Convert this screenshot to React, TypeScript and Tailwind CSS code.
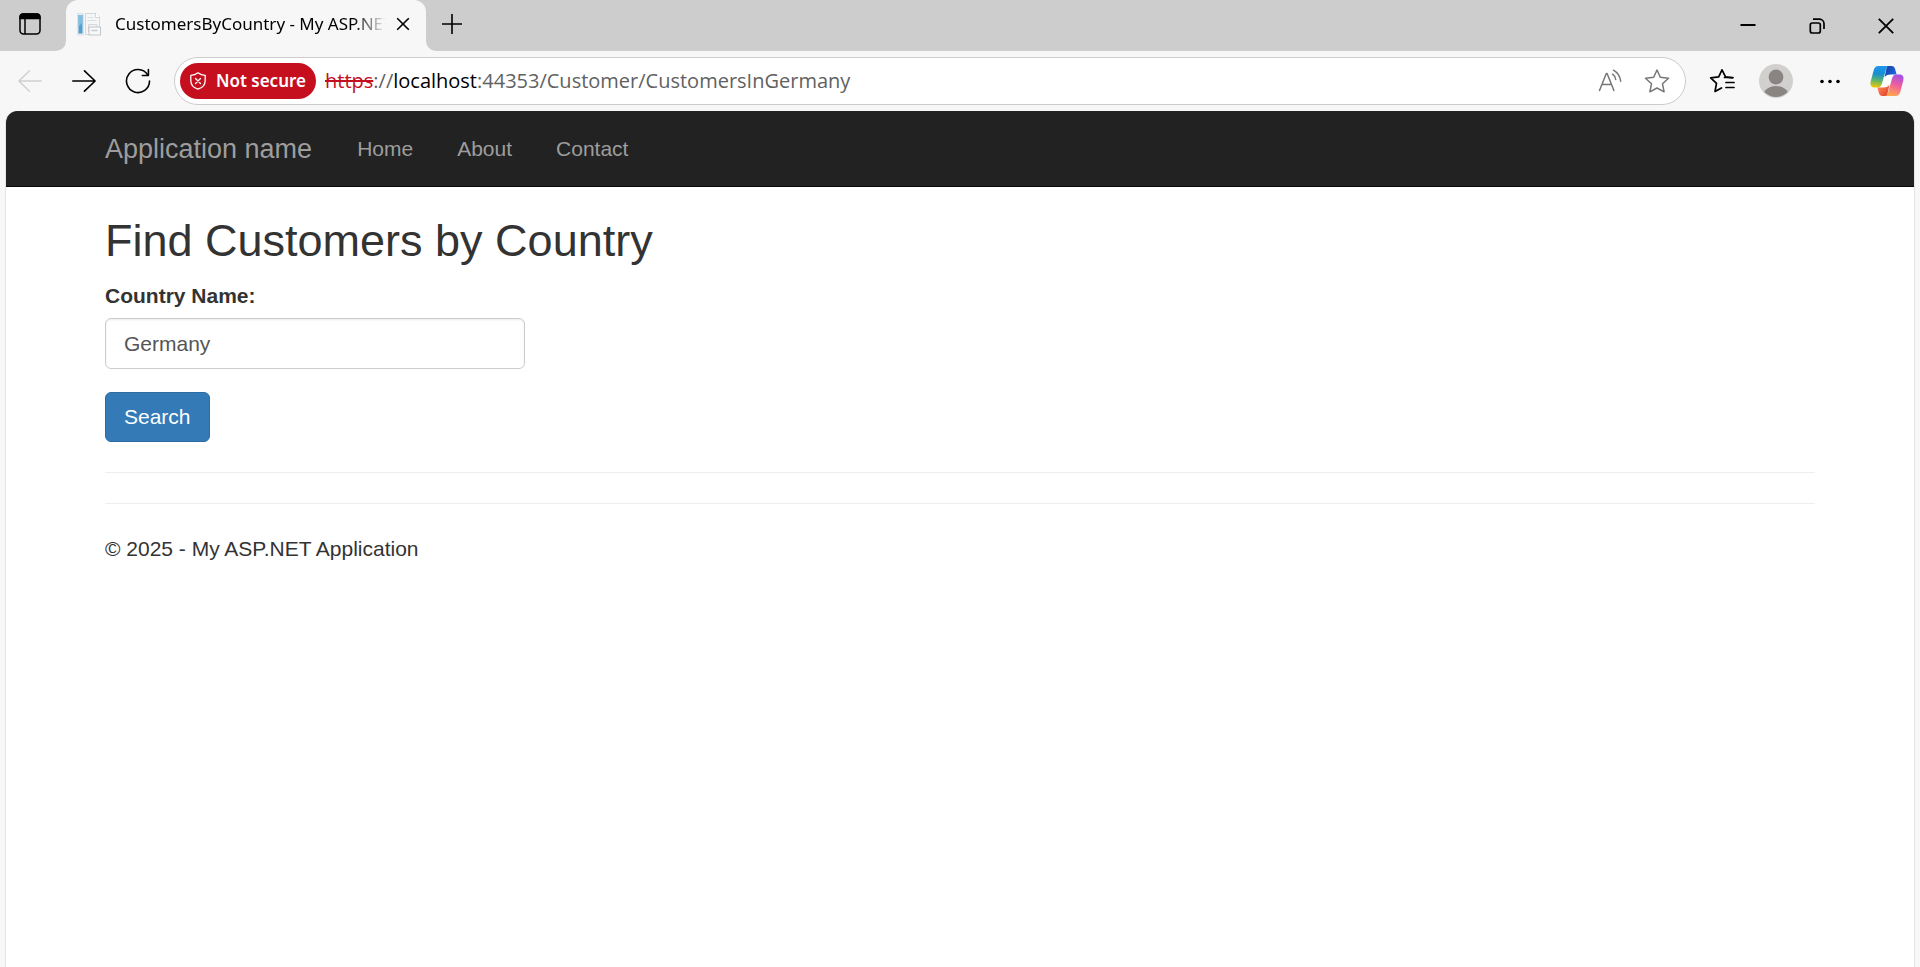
import { useState } from "react";

const navLinks = ["Home", "About", "Contact"];

function SiteIcon() {
  return (
    <svg className="size-6 shrink-0" viewBox="0 0 24 24" fill="none" aria-hidden="true">
      <path d="M.5 1.500h6V23h-6z" fill="#e6ecf0" stroke="#dfe3e6" />
      <path d="M8.500 1.500H19L22.500 5v17.500h-14z" fill="#f4f6f7" stroke="#d6d9dc" />
      <path d="M18.500 1v4.500H23" stroke="#d2d5d8" fill="#fff" />
      <rect x="1.500" y="3" width="4" height="18.500" fill="#4f9fd0" />
      <path d="M1.500 3h4v7l-4 5z" fill="#84bfe2" />
      <path d="M10.500 5.500h6M10.500 8.500h9M10.500 17.500h1" stroke="#dcdfe1" />
      <path d="M11.500 20V12.500h8.500V15" fill="#f2f3f4" stroke="#d6d9dc" />
      <rect x="12" y="15" width="11.500" height="8" fill="#f7f8f9" stroke="#c3c6c9" />
      <path d="M14.500 18.500h6" stroke="#c9ccd0" strokeWidth="1.500" />
    </svg>
  );
}

function CopilotIcon() {
  return (
    <svg className="h-8 w-9" viewBox="0 0 36 32" aria-hidden="true">
      <defs>
        <linearGradient id="cp-left" x1="10" y1="1" x2="7" y2="23" gradientUnits="userSpaceOnUse">
          <stop offset="0" stopColor="#1d96ea" />
          <stop offset="0.350" stopColor="#168fd2" />
          <stop offset="0.650" stopColor="#5bb56d" />
          <stop offset="1" stopColor="#fbc900" />
        </linearGradient>
        <linearGradient id="cp-fold" x1="17" y1="3" x2="26" y2="9" gradientUnits="userSpaceOnUse">
          <stop offset="0" stopColor="#1443a5" />
          <stop offset="1" stopColor="#1f64e2" />
        </linearGradient>
        <linearGradient id="cp-right" x1="31" y1="9" x2="24" y2="31" gradientUnits="userSpaceOnUse">
          <stop offset="0" stopColor="#9a4df0" />
          <stop offset="0.500" stopColor="#ef5f9d" />
          <stop offset="1" stopColor="#ffa450" />
        </linearGradient>
        <linearGradient id="cp-base" x1="11" y1="23" x2="19" y2="31" gradientUnits="userSpaceOnUse">
          <stop offset="0" stopColor="#fb7a4c" />
          <stop offset="1" stopColor="#e0402c" />
        </linearGradient>
      </defs>
      <path d="M14 10h12l-2.500 12H11z" fill="#ffffff" />
      <path d="M18 1h4.500c2 0 3 1 3.600 3l1.500 5.500h-6c-2.500 0-4.500.8-6 2.500z" fill="url(#cp-fold)" />
      <path d="M18 31h-4.500c-2 0-3-1-3.600-3L8.400 22.500h6c2.500 0 4.500-.8 6-2.500z" fill="url(#cp-base)" />
      <path d="M9.500 1H20c-2 .3-2.700 2-3.200 4L13 18.500c-.8 2.800-2 4-4.500 4h-3C2.200 22.500.8 20 1.700 16.500L4.600 5.500C5.400 2.600 6.800 1 9.500 1z" fill="url(#cp-left)" />
      <path d="M26.500 31H16c2-.3 2.700-2 3.200-4L23 13.500c.8-2.800 2-4 4.500-4h3c3.300 0 4.700 2.500 3.800 6l-2.900 11c-.8 2.900-2.200 4.500-4.900 4.500z" fill="url(#cp-right)" />
    </svg>
  );
}

function TabStrip() {
  return (
    <div className="flex h-[51px] bg-[#cdcdcd] text-black">
      <button type="button" aria-label="Tab actions" className="mr-1.5 flex w-[60px] items-center justify-center pb-1">
        <svg className="size-6" viewBox="0 0 24 24" fill="none" aria-hidden="true">
          <rect x="2" y="2" width="20" height="20" rx="3.500" stroke="currentColor" strokeWidth="1.500" />
          <path d="M1.300 7.200V5a3.700 3.700 0 0 1 3.700-3.700h14A3.700 3.700 0 0 1 22.700 5v2.200z" fill="currentColor" />
          <path d="M7 7v15" stroke="currentColor" strokeWidth="1.500" />
        </svg>
      </button>
      <div className="relative flex w-[360px] items-center rounded-t-xl bg-[#f7f7f7] pb-1 pl-[11px] pr-2.5">
        <svg className="absolute -left-2.5 bottom-0 size-2.5" viewBox="0 0 10 10" aria-hidden="true">
          <path d="M10 0v10H0A10 10 0 0 0 10 0z" fill="#f7f7f7" />
        </svg>
        <svg className="absolute -right-2.5 bottom-0 size-2.5" viewBox="0 0 10 10" aria-hidden="true">
          <path d="M0 0v10h10A10 10 0 0 1 0 0z" fill="#f7f7f7" />
        </svg>
        <SiteIcon />
        <span className="ml-3.5 min-w-0 flex-1 overflow-hidden whitespace-nowrap text-[17px] leading-6 [mask-image:linear-gradient(to_right,black_88%,transparent)]">
          CustomersByCountry - My ASP.NET Application
        </span>
        <button type="button" aria-label="Close tab" className="ml-1 flex size-[26px] items-center justify-center">
          <svg className="size-3.5" viewBox="0 0 14 14" aria-hidden="true">
            <path d="M1.200 1.200l11.600 11.600M12.800 1.200L1.200 12.800" stroke="currentColor" strokeWidth="1.600" />
          </svg>
        </button>
      </div>
      <button type="button" aria-label="New tab" className="flex w-[52px] items-center justify-center pb-1">
        <svg className="size-[22px]" viewBox="0 0 22 22" aria-hidden="true">
          <path d="M11 1v20M1 11h20" stroke="currentColor" strokeWidth="1.600" />
        </svg>
      </button>
      <div className="ml-auto flex">
        <button type="button" aria-label="Minimize" className="flex w-[69px] items-center justify-center pb-px">
          <svg className="size-4" viewBox="0 0 16 16" aria-hidden="true">
            <path d="M.5 8h15" stroke="currentColor" strokeWidth="2" />
          </svg>
        </button>
        <button type="button" aria-label="Restore" className="flex w-[69px] items-center justify-center">
          <svg className="size-4" viewBox="0 0 16 16" fill="none" stroke="currentColor" strokeWidth="1.700" aria-hidden="true">
            <rect x="1.300" y="5" width="10" height="10" rx="2" />
            <path d="M4 1.200h6.500A4.500 4.500 0 0 1 15 5.700V11" />
          </svg>
        </button>
        <button type="button" aria-label="Close" className="flex w-[69px] items-center justify-center">
          <svg className="size-4" viewBox="0 0 16 16" aria-hidden="true">
            <path d="M.8 .8l14.400 14.400M15.200 .8L.8 15.200" stroke="currentColor" strokeWidth="1.800" />
          </svg>
        </button>
      </div>
    </div>
  );
}

function Toolbar() {
  const button = "flex h-12 w-[54px] shrink-0 items-center justify-center";
  return (
    <div className="flex h-[60px] items-center px-[3px] text-black">
      <button type="button" aria-label="Back" disabled className={`${button} text-[#cfcfcf]`}>
        <svg className="size-6" viewBox="0 0 24 24" fill="none" stroke="currentColor" strokeWidth="1.500" strokeLinecap="round" strokeLinejoin="round" aria-hidden="true">
          <path d="M23.200 12H.9M11.500 1.800L.9 12l10.600 10.200" />
        </svg>
      </button>
      <button type="button" aria-label="Forward" className={button}>
        <svg className="size-6" viewBox="0 0 24 24" fill="none" stroke="currentColor" strokeWidth="1.600" strokeLinecap="round" strokeLinejoin="round" aria-hidden="true">
          <path d="M.8 12h22.300M12.500 1.800L23.100 12 12.500 22.200" />
        </svg>
      </button>
      <button type="button" aria-label="Refresh" className={button}>
        <svg className="size-[26px]" viewBox="0 0 26 26" fill="none" stroke="currentColor" strokeWidth="1.600" strokeLinecap="round" strokeLinejoin="round" aria-hidden="true">
          <path d="M24.500 13A11.500 11.500 0 1 1 22.600 6.700" />
          <path d="M23.400 1.500v6h-6" />
        </svg>
      </button>
      <div className="ml-[9px] flex h-12 min-w-0 flex-1 items-center rounded-full border border-[#cccccc] bg-white px-[5px]">
        <button type="button" className="flex h-9 w-[136px] shrink-0 items-center justify-center gap-2.5 whitespace-nowrap rounded-full bg-[#c50f1f] text-[17px] font-semibold leading-6 text-white">
          <svg className="h-[18px] w-4" viewBox="0 0 16 18" fill="none" stroke="currentColor" strokeWidth="1.300" strokeLinejoin="round" strokeLinecap="round" aria-hidden="true">
            <path d="M8 .8c2 1.700 4.400 2.500 7.200 2.500v5.200c0 4.200-2.400 7.200-7.200 8.700C3.200 15.700.8 12.700.8 8.500V3.300C3.600 3.300 6 2.500 8 .8z" />
            <path d="M5.500 6.500l5 5M10.500 6.500l-5 5" />
          </svg>
          Not secure
        </button>
        <div
          role="textbox"
          aria-label="Address and search bar"
          contentEditable
          suppressContentEditableWarning
          spellCheck={false}
          className="ml-[9px] min-w-0 flex-1 truncate font-['Open_Sans',sans-serif] text-[20px] leading-7 text-[#616161] outline-none"
        >
          <span className="text-[#c50f1f] line-through decoration-2">https</span>
          <span>://</span>
          <span className="text-black">localhost</span>
          <span>:44353/Customer/CustomersInGermany</span>
        </div>
        <button type="button" aria-label="Read aloud" className="flex h-10 w-12 items-center justify-center text-[#767676]">
          <svg className="size-6" viewBox="0 0 24 24" fill="none" stroke="currentColor" strokeWidth="1.500" strokeLinecap="round" strokeLinejoin="round" aria-hidden="true">
            <path d="M1.500 21.500L8.300 4.500h.8l6.800 17M4 15.500h9.400" />
            <path d="M14.500 5.200c1.800 1.200 2.900 3 3.200 5.300M15.500 1.200c4 2.300 6.500 6 7.200 11" />
          </svg>
        </button>
        <button type="button" aria-label="Add to favorites" className="flex h-10 w-[46px] items-center justify-center text-[#767676]">
          <svg className="size-[26px]" viewBox="0 0 26 26" fill="none" stroke="currentColor" strokeWidth="1.500" strokeLinejoin="round" aria-hidden="true">
            <path d="M13 2l3.300 7.200 8.200 1-6 5.600 1.600 8L13 20l-7.100 3.800 1.600-8-6-5.600 8.200-1z" />
          </svg>
        </button>
      </div>
      <div className="ml-[9px] flex shrink-0">
        <button type="button" aria-label="Favorites" className={button}>
          <svg className="size-[26px]" viewBox="0 0 26 26" fill="none" stroke="currentColor" strokeWidth="1.700" strokeLinecap="round" strokeLinejoin="round" aria-hidden="true">
            <path d="M23.500 9.800l-7-.9L13 1.800 9.700 8.900l-8 1 5.800 5.500L6 23.500l6.500-3.600" />
            <path d="M15.500 9.500H24M17 14.500h8M17 19.500h8" />
          </svg>
        </button>
        <button type="button" aria-label="Profile" className={button}>
          <svg className="size-[34px]" viewBox="0 0 34 34" aria-hidden="true">
            <defs>
              <clipPath id="avatar-clip">
                <circle cx="17" cy="17" r="16" />
              </clipPath>
            </defs>
            <circle cx="17" cy="17" r="17" fill="#d2d0ce" />
            <g fill="#8a8583" clipPath="url(#avatar-clip)">
              <circle cx="17" cy="13" r="7.400" />
              <ellipse cx="17" cy="32.500" rx="13" ry="10.500" />
            </g>
          </svg>
        </button>
        <button type="button" aria-label="Settings and more" className={button}>
          <svg className="h-4 w-5" viewBox="0 0 20 16" fill="currentColor" aria-hidden="true">
            <circle cx="2" cy="8.500" r="1.800" />
            <circle cx="10" cy="8.500" r="1.800" />
            <circle cx="18" cy="8.500" r="1.800" />
          </svg>
        </button>
        <button type="button" aria-label="Copilot" className="flex h-12 w-[60px] items-center justify-center">
          <CopilotIcon />
        </button>
      </div>
    </div>
  );
}

export default function App() {
  const [country, setCountry] = useState("Germany");
  const container = "mx-auto w-full max-w-[1756px] px-[23px]";

  return (
    <div className="flex min-h-screen flex-col bg-[#f7f7f7]">
      <header className="font-['Noto_Sans',sans-serif]">
        <TabStrip />
        <Toolbar />
      </header>

      <div className="mx-[5px] flex flex-1 flex-col overflow-hidden rounded-t-xl border-x border-[#e5e5e5] bg-white font-['Liberation_Sans',Arial,sans-serif] text-[21px] leading-[30px] text-[#333333]">
        <nav className="border-b border-[#080808] bg-[#222222] text-[#9d9d9d]">
          <div className={`${container} flex h-[75px] items-center`}>
            <a href="#" className="mr-[23px] text-[27px]">
              Application name
            </a>
            {navLinks.map((label) => (
              <a key={label} href="#" className="px-[22px]">
                {label}
              </a>
            ))}
          </div>
        </nav>

        <main className={`${container} pt-[29px]`}>
          <h2 className="mb-[15px] text-[45px] font-medium leading-[50px]">Find Customers by Country</h2>
          <form onSubmit={(event) => event.preventDefault()}>
            <label htmlFor="country" className="mb-[7px] block font-bold">
              Country Name:
            </label>
            <input
              id="country"
              type="text"
              value={country}
              onChange={(event) => setCountry(event.target.value)}
              className="block h-[51px] w-[420px] max-w-full rounded-md border border-[#cccccc] bg-white px-[18px] text-[#555555] shadow-[inset_0_1px_2px_rgba(0,0,0,0.075)] outline-none"
            />
            <button
              type="submit"
              className="mt-[23px] block h-[50px] rounded-md border border-[#2e6da4] bg-[#337ab7] px-[18px] text-white"
            >
              Search
            </button>
          </form>
          <hr className="my-[30px] border-[#eeeeee]" />
          <hr className="my-[30px] border-[#eeeeee]" />
          <footer>
            <p>© 2025 - My ASP.NET Application</p>
          </footer>
        </main>
      </div>
    </div>
  );
}
